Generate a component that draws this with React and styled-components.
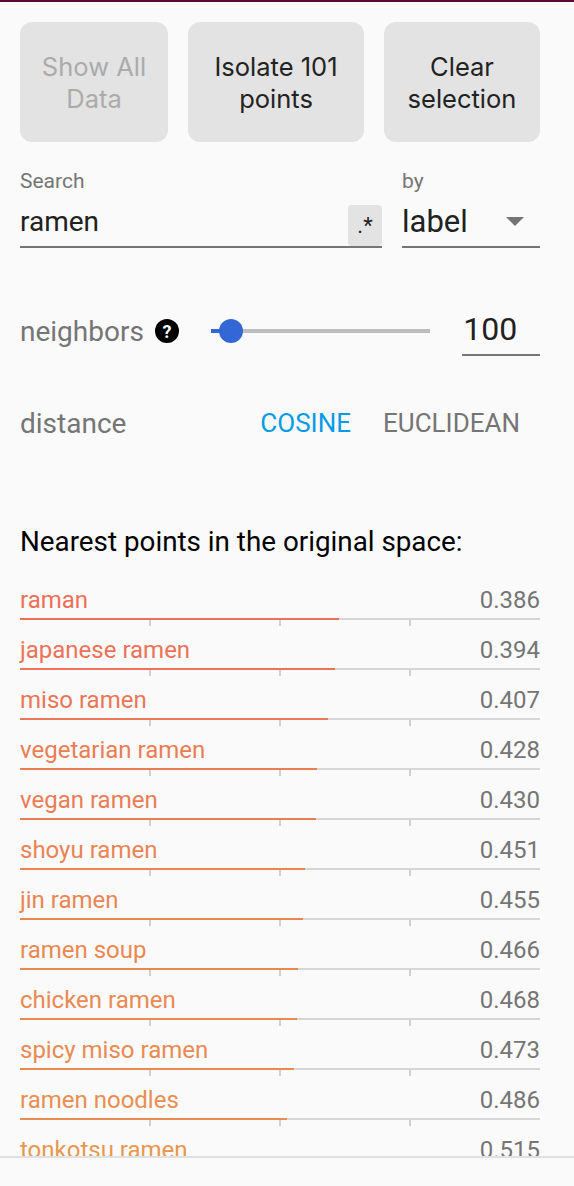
import React from 'react'
import styled, { createGlobalStyle } from 'styled-components'

const GlobalStyle = createGlobalStyle`
  html, body {
    margin: 0;
    padding: 0;
    background: #fafafa;
  }
  body {
    font-family: Roboto, "Liberation Sans", sans-serif;
    color: #212121;
  }
`

const neighbors = [
    { label: 'raman', dist: 0.386 },
    { label: 'japanese ramen', dist: 0.394 },
    { label: 'miso ramen', dist: 0.407 },
    { label: 'vegetarian ramen', dist: 0.428 },
    { label: 'vegan ramen', dist: 0.43 },
    { label: 'shoyu ramen', dist: 0.451 },
    { label: 'jin ramen', dist: 0.455 },
    { label: 'ramen soup', dist: 0.466 },
    { label: 'chicken ramen', dist: 0.468 },
    { label: 'spicy miso ramen', dist: 0.473 },
    { label: 'ramen noodles', dist: 0.486 },
    { label: 'tonkotsu ramen', dist: 0.515 },
]

// red-orange for the closest points, fading to orange
const colorFor = (d) => {
    const t = Math.min(1, Math.max(0, (d - 0.386) / (0.515 - 0.386)))
    const a = [236, 112, 88]
    const b = [232, 151, 80]
    const c = a.map((v, i) => Math.round(v + (b[i] - v) * t))
    return `rgb(${c[0]}, ${c[1]}, ${c[2]})`
}

const Inspector = () => {
    return (
        <Page>
            <GlobalStyle />
            <Scroll>
                <ButtonRow>
                    <ActionButton width={148} disabled>Show All<br />Data</ActionButton>
                    <ActionButton width={176}>Isolate 101<br />points</ActionButton>
                    <ActionButton width={156}>Clear<br />selection</ActionButton>
                </ButtonRow>

                <SearchRow>
                    <Field grow>
                        <FieldLabel>Search</FieldLabel>
                        <InputLine>
                            <InputText>ramen</InputText>
                            <RegexToggle>.*</RegexToggle>
                        </InputLine>
                    </Field>
                    <Field width={138}>
                        <FieldLabel>by</FieldLabel>
                        <InputLine>
                            <InputText big>label</InputText>
                            <Caret />
                        </InputLine>
                    </Field>
                </SearchRow>

                <OptionRow>
                    <OptionLabel>neighbors</OptionLabel>
                    <HelpIcon>?</HelpIcon>
                    <Slider>
                        <SliderFill />
                        <SliderThumb />
                    </Slider>
                    <ValueBox>100</ValueBox>
                </OptionRow>

                <OptionRow gap={42}>
                    <OptionLabel grow>distance</OptionLabel>
                    <Toggle active>Cosine</Toggle>
                    <Toggle>Euclidean</Toggle>
                </OptionRow>

                <Heading>Nearest points in the original space:</Heading>

                <List>
                    {neighbors.map((n) => {
                        const color = colorFor(n.dist)
                        return (
                            <Item key={n.label}>
                                <ItemTop>
                                    <ItemLabel style={{ color }}>{n.label}</ItemLabel>
                                    <ItemValue>{n.dist.toFixed(3)}</ItemValue>
                                </ItemTop>
                                <Bar>
                                    <BarFill style={{ width: `${(1 - n.dist) * 100}%`, background: color }} />
                                    <Tick pos={25} />
                                    <Tick pos={50} />
                                    <Tick pos={75} />
                                </Bar>
                            </Item>
                        )
                    })}
                </List>
            </Scroll>
            <Footer />
        </Page>
    )
}

const Page = styled.div`
width: 574px;
height: 1186px;
box-sizing: border-box;
border-top: 2px solid #5a0a32;
display: flex;
flex-direction: column;
background: #fafafa;
overflow: hidden;
`
const Scroll = styled.div`
flex: 1;
min-height: 0;
overflow: hidden;
padding: 20px 34px 0 20px;
border-bottom: 2px solid #e0e0e0;
`
const Footer = styled.div`
height: 28px;
flex: none;
`
const ButtonRow = styled.div`
display: flex;
gap: 20px;
`
const ActionButton = styled.button`
width: ${p => p.width}px;
height: 120px;
border: none;
border-radius: 12px;
background: #e3e3e3;
padding: 2px 0 0;
font-family: Inter, "Open Sans", sans-serif;
font-size: 25.5px;
line-height: 32px;
color: #222;
&:disabled{
    color: #ababab;
}
`
const SearchRow = styled.div`
display: flex;
gap: 20px;
margin-top: 28px;
`
const Field = styled.div`
display: flex;
flex-direction: column;
${p => p.grow ? 'flex: 1;' : `width: ${p.width}px;`}
`
const FieldLabel = styled.div`
font-size: 21px;
line-height: 22px;
color: #757575;
`
const InputLine = styled.div`
display: flex;
align-items: flex-end;
height: 54px;
border-bottom: 2px solid #757575;
`
const InputText = styled.span`
flex: 1;
font-size: ${p => p.big ? 31 : 28}px;
line-height: 36px;
padding-bottom: 6px;
color: #212121;
`
const RegexToggle = styled.span`
width: 34px;
height: 41px;
border-radius: 4px;
background: #e3e3e3;
display: flex;
align-items: center;
justify-content: center;
font-size: 22px;
color: #212121;
`
const Caret = styled.span`
width: 0;
height: 0;
margin: 0 16px 20px 0;
border-left: 9px solid transparent;
border-right: 9px solid transparent;
border-top: 9px solid #757575;
`
const OptionRow = styled.div`
display: flex;
align-items: center;
height: 50px;
margin-top: ${p => p.gap || 58}px;
`
const OptionLabel = styled.span`
font-size: 28px;
color: #757575;
${p => p.grow && 'flex: 1;'}
`
const HelpIcon = styled.span`
width: 24px;
height: 24px;
border-radius: 50%;
background: #000;
color: #fff;
font-size: 18px;
font-weight: 700;
display: flex;
align-items: center;
justify-content: center;
margin-left: 11px;
`
const Slider = styled.div`
position: relative;
width: 220px;
height: 4px;
background: #bdbdbd;
margin-left: 32px;
margin-right: 32px;
`
const SliderFill = styled.div`
width: 20px;
height: 100%;
background: #3367d6;
`
const SliderThumb = styled.div`
position: absolute;
left: 8px;
top: -10px;
width: 24px;
height: 24px;
border-radius: 50%;
background: #3367d6;
`
const ValueBox = styled.div`
width: 78px;
height: 50px;
box-sizing: border-box;
border-bottom: 2px solid #757575;
font-size: 32px;
line-height: 46px;
color: #212121;
padding-left: 1px;
`
const Toggle = styled.span`
font-size: 26px;
text-transform: uppercase;
color: ${p => p.active ? '#039be5' : '#757575'};
padding: 0 16px;
&:last-child{
    padding-right: 20px;
}
`
const Heading = styled.div`
margin-top: 79px;
font-size: 27.8px;
line-height: 30px;
color: #000;
`
const List = styled.div`
margin-top: 28px;
`
const Item = styled.div`
height: 50px;
`
const ItemTop = styled.div`
display: flex;
justify-content: space-between;
align-items: center;
height: 30px;
`
const ItemLabel = styled.span`
font-size: 24px;
`
const ItemValue = styled.span`
font-size: 24px;
color: #757575;
`
const Bar = styled.div`
position: relative;
margin-top: 3px;
height: 2px;
background: #d6d6d6;
`
const BarFill = styled.div`
height: 100%;
`
const Tick = styled.span`
position: absolute;
top: 2px;
left: ${p => p.pos}%;
width: 2px;
height: 6px;
margin-left: -1px;
background: #d0d0d0;
`

export default function App() {
    return <Inspector />
}
